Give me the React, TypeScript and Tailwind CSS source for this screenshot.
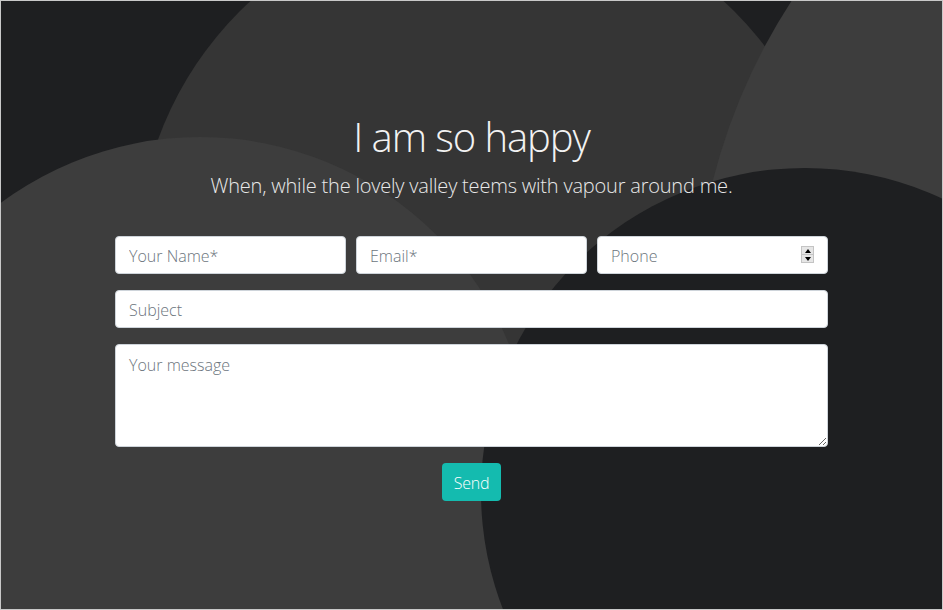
import { useState } from 'react';

function Backdrop() {
  return (
    <svg className="absolute inset-0 h-full w-full" viewBox="0 0 941 608" preserveAspectRatio="none">
      <rect width="941" height="608" fill="#1e1f21" />
      <circle cx="486" cy="258" r="350" fill="#353535" />
      <circle cx="1297" cy="329" r="604" fill="#3d3d3d" />
      <circle cx="199" cy="470" r="334" fill="#3d3d3d" />
      <circle cx="804" cy="491" r="324" fill="#1e1f21" />
    </svg>
  );
}

function Spinner() {
  return (
    <div className="absolute right-[14px] top-[10px] flex h-[17px] w-[13px] flex-col border border-[#c4c4c4] bg-[#e6e6e6]">
      <div className="flex flex-1 items-center justify-center border-b border-[#c4c4c4]">
        <span className="h-0 w-0 border-x-[3px] border-b-[4px] border-x-transparent border-b-black" />
      </div>
      <div className="flex flex-1 items-center justify-center">
        <span className="h-0 w-0 border-x-[3px] border-t-[4px] border-x-transparent border-t-black" />
      </div>
    </div>
  );
}

const field =
  'w-full rounded-[4px] border border-[#ced4da] bg-white pl-[13px] pr-[12px] text-[16px] font-light text-[#495057] outline-none placeholder:text-[#6c757d]';

export default function App() {
  const [msg, setMsg] = useState('');

  return (
    <main
      className="relative h-[610px] w-[943px] overflow-hidden border border-[#c9c9c9]"
      style={{ fontFamily: '"Open Sans", "Noto Sans", sans-serif' }}
    >
      <Backdrop />
      <div className="relative flex flex-col items-center pt-[112px]">
        <h1 className="text-[40px] font-light leading-[48px] tracking-[-1.1px] text-[#f2f2f2]">I am so happy</h1>
        <p className="mt-[10px] text-[20px] font-light leading-[30px] tracking-[-0.2px] text-[#e9e9e9]">
          When, while the lovely valley teems with vapour around me.
        </p>

        <form className="mt-[35px] flex w-[713px] flex-col gap-[16px]" onSubmit={(e) => e.preventDefault()}>
          <div className="grid grid-cols-3 gap-[10px]">
            <input className={field + ' h-[38px] pt-[2px]'} placeholder="Your Name*" />
            <input className={field + ' h-[38px] pt-[2px]'} placeholder="Email*" />
            <div className="relative">
              <input className={field + ' h-[38px] pt-[2px]'} placeholder="Phone" />
              <Spinner />
            </div>
          </div>
          <input className={field + ' h-[38px] pt-[2px]'} placeholder="Subject" />
          <textarea
            className={field + ' h-[103px] resize-y pt-[8px] pb-[6px] leading-[24px]'}
            placeholder="Your message"
            value={msg}
            onChange={(e) => setMsg(e.target.value)}
          />
          <div className="flex justify-center">
            <button
              type="submit"
              className="h-[38px] w-[59px] rounded-[4px] bg-[#14bbaf] pt-[2px] text-[16px] font-light tracking-[-0.2px] text-white"
            >
              Send
            </button>
          </div>
        </form>
      </div>
    </main>
  );
}
